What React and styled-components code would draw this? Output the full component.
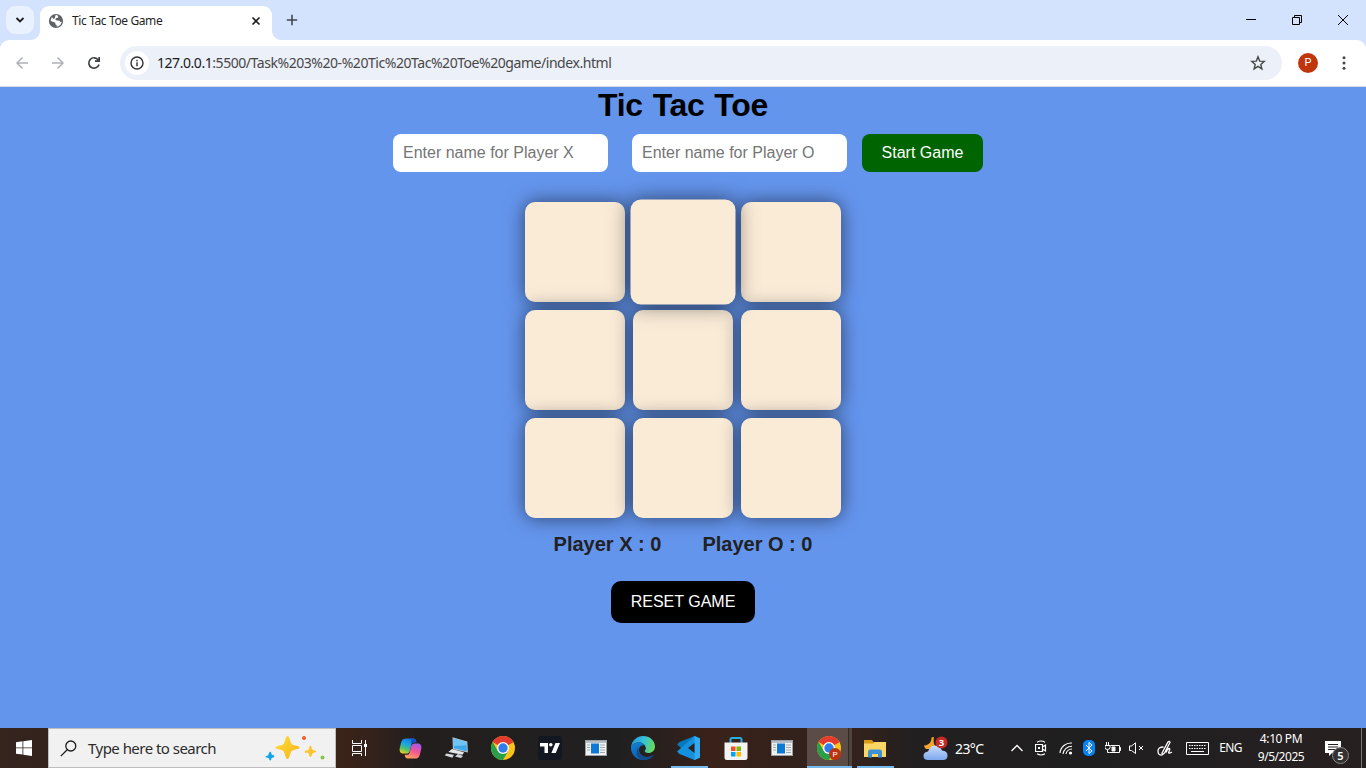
import React from "react";
import styled, { createGlobalStyle, css } from "styled-components";

const Global = createGlobalStyle`
  * { box-sizing: border-box; }
  html, body { margin: 0; padding: 0; overflow: hidden; }
`;

const ui = `"Noto Sans", "Open Sans", sans-serif`;
const arial = `"Liberation Sans", Arial, sans-serif`;

const Screen = styled.div`
  width: 1366px;
  height: 768px;
  display: flex;
  flex-direction: column;
  font-family: ${ui};
  overflow: hidden;
`;

/* ---------- browser chrome ---------- */

const TabStrip = styled.header`
  height: 40px;
  flex: none;
  background: #d3e2fd;
  display: flex;
  align-items: flex-start;
  padding-left: 6px;
`;

const TabSearch = styled.button`
  width: 28px;
  height: 28px;
  margin: 6px 6px 0 0;
  padding: 0;
  border: 0;
  border-radius: 9px;
  background: #e9f0fe;
  display: grid;
  place-items: center;
`;

const Tab = styled.div`
  position: relative;
  width: 232px;
  height: 34px;
  margin-top: 6px;
  padding: 0 9px 5px 8px;
  border-radius: 9px 9px 0 0;
  background: #fff;
  display: flex;
  align-items: center;
  &::before, &::after {
    content: "";
    position: absolute;
    bottom: 0;
    width: 9px;
    height: 9px;
  }
  &::before {
    left: -9px;
    background: radial-gradient(circle at 0 0, transparent 8.5px, #fff 9.2px);
  }
  &::after {
    right: -9px;
    background: radial-gradient(circle at 100% 0, transparent 8.5px, #fff 9.2px);
  }
`;

const TabTitle = styled.span`
  flex: 1;
  margin-left: 8px;
  font-size: 12px;
  line-height: 16px;
  letter-spacing: -0.38px;
  color: #1f1f1f;
  white-space: nowrap;
`;

const NewTab = styled.div`
  margin: 14px 0 0 14px;
  height: 12px;
  display: flex;
`;

const WindowControls = styled.div`
  margin-left: auto;
  display: flex;
`;

const WindowButton = styled.div`
  width: 46px;
  height: 40px;
  display: grid;
  place-items: center;
`;

const ToolbarBack = styled.div`
  flex: none;
  background: #d3e2fd;
`;

const Toolbar = styled.nav`
  height: 47px;
  background: #fff;
  border-radius: 9px 9px 0 0;
  border-bottom: 1px solid #d6dae2;
  display: flex;
  align-items: center;
  padding: 0 14px 0 14px;
`;

const NavIcon = styled.div`
  width: 16px;
  height: 16px;
  margin-right: 20px;
  display: flex;
`;

const AddressBar = styled.div`
  width: 1162px;
  height: 34px;
  margin-left: -2px;
  border-radius: 17px;
  background: #ecf0f9;
  display: flex;
  align-items: center;
  padding: 0 16px 0 5px;
`;

const SiteInfo = styled.div`
  width: 24px;
  height: 24px;
  border-radius: 50%;
  background: #fff;
  display: grid;
  place-items: center;
  margin-right: 8px;
`;

const Url = styled.span`
  flex: 1;
  font-size: 14px;
  line-height: 20px;
  letter-spacing: -0.45px;
  white-space: nowrap;
  color: #474747;
  b { font-weight: 400; color: #1a1a1a; }
`;

const Profile = styled.div`
  width: 20px;
  height: 20px;
  border-radius: 50%;
  background: #bf360c;
  color: #fff;
  font: 400 11px/20px Roboto, sans-serif;
  text-align: center;
  margin: 0 18px 0 16px;
`;

/* ---------- game page ---------- */

const Page = styled.main`
  height: 641px;
  flex: none;
  background: #6495ed;
  display: flex;
  flex-direction: column;
  align-items: center;
  font-family: ${arial};
  overflow: hidden;
`;

const Title = styled.h1`
  margin: 0;
  height: 37px;
  font-size: 32px;
  line-height: 37px;
  font-weight: 700;
  letter-spacing: -0.3px;
  word-spacing: 1.2px;
  color: #000;
`;

const Players = styled.form`
  display: flex;
  margin: 10px 0 0 10px;
`;

const NameInput = styled.input`
  width: 215px;
  height: 38px;
  padding: 0 10px;
  margin-right: ${(p) => p.$gap}px;
  border: 0;
  border-radius: 8px;
  background: #fff;
  font: 16px ${arial};
  color: #000;
  &::placeholder { color: #757575; opacity: 1; }
`;

const Button = styled.button`
  width: ${(p) => p.$width}px;
  height: ${(p) => p.$height}px;
  border: 0;
  padding: 0;
  border-radius: ${(p) => p.$radius}px;
  background: ${(p) => p.$color};
  color: #fff;
  font: 16px ${arial};
`;

const Board = styled.section`
  display: grid;
  grid-template-columns: repeat(3, 100px);
  grid-auto-rows: 100px;
  gap: 8px;
  margin-top: 30px;
`;

const Cell = styled.div`
  border-radius: 10px;
  background: #faebd7;
  box-shadow: 0 0 20px rgba(0, 0, 0, 0.55);
  ${(p) => p.$hover && css`
    transform: scale(1.05);
  `}
`;

const Scores = styled.div`
  display: flex;
  gap: 41px;
  height: 24px;
  margin: 14px 0 25px;
  font-size: 20px;
  line-height: 24px;
  font-weight: 700;
  color: #212121;
`;

/* ---------- taskbar ---------- */

const Taskbar = styled.footer`
  height: 40px;
  flex: none;
  display: flex;
  color: #fff;
  background: linear-gradient(90deg, #36241d 0, #33231d 48px, #3b2318 336px, #35221b 370px, #231e1e 415px, #201f20 620px, #2b201d 670px, #3a2219 710px, #33211b 790px, #33221d 860px, #211f1f 915px, #201f20 1100px, #272021 1366px);
  > * { flex: none; }
`;

const Start = styled.div`
  width: 48px;
  display: grid;
  place-items: center;
`;

const Search = styled.div`
  width: 288px;
  background: #f1f1f1;
  border: 1px solid #bdbdbd;
  display: flex;
  align-items: center;
  padding: 0 9px 0 11px;
`;

const SearchText = styled.span`
  flex: 1;
  margin-left: 11px;
  font-size: 15px;
  line-height: 20px;
  letter-spacing: -0.53px;
  color: #2c2c2c;
  white-space: nowrap;
`;

const TaskView = styled.div`
  width: 48px;
  display: grid;
  place-items: center;
`;

const Apps = styled.div`
  display: flex;
  padding-left: 3px;
`;

const AppSlot = styled.div`
  width: 46.5px;
  display: flex;
  justify-content: center;
  align-items: center;
  svg { flex: none; }
`;

const Underlined = styled.div`
  width: ${(p) => p.$width}px;
  height: 40px;
  flex: none;
  border-bottom: 2px solid #76b9ed;
  padding-top: 2px;
  display: grid;
  place-items: center;
  ${(p) => p.$active && css`
    margin-left: 1px;
    background: linear-gradient(90deg, #5b4c47 0 41px, #332925 41px 42px, #50423e 42px);
  `}
`;

const Weather = styled.div`
  display: flex;
  align-items: center;
  margin-left: 24.5px;
  width: 82px;
  gap: 7px;
`;

const Temp = styled.span`
  font-size: 14px;
  letter-spacing: -0.6px;
  white-space: nowrap;
`;

const TrayItem = styled.div`
  width: ${(p) => p.$width}px;
  display: grid;
  place-items: center;
`;

const TrayText = styled.span`
  font-size: 12px;
  line-height: 18px;
  letter-spacing: ${(p) => p.$spacing || 0}px;
  white-space: nowrap;
`;

const Clock = styled.div`
  width: 66px;
  display: flex;
  flex-direction: column;
  align-items: center;
  padding-top: 2px;
`;

const Notifications = styled.div`
  position: relative;
  width: 48px;
  padding: 12px 0 0 11px;
  border-right: 1px solid #777;
`;

const Count = styled.span`
  position: absolute;
  left: 18px;
  top: 19px;
  width: 17px;
  height: 17px;
  border-radius: 50%;
  border: 1px solid #8a8a8a;
  background: #333132;
  font: 600 11px/15px ${ui};
  text-align: center;
`;

/* ---------- icons ---------- */

const Stroke = ({ w = 16, h = 16, c = "#fff", sw = 1, d, children }) => (
  <svg width={w} height={h} viewBox={`0 0 ${w} ${h}`} fill="none" stroke={c} strokeWidth={sw}>
    {d && <path d={d} />}
    {children}
  </svg>
);

const Globe = () => (
  <svg width="16" height="16" viewBox="0 0 16 16">
    <circle cx="8" cy="8" r="7.1" fill="#5f6368" />
    <path d="M7.2 2.4 9 2.1l1.2 1.1-.3 1.6-2 .5-.5 1.6 1.8.7 2.3.2.9 1.2 1.2-.3.2-1.6A5.7 5.7 0 0 1 8.6 13.7l.2-1.5-1.5-.9.1-1.5-1.8-.9-2.8-.8A5.6 5.6 0 0 1 4 4l1.3 2 1.7-.9z" fill="#fff" />
  </svg>
);

const Sparkles = () => (
  <svg width="62" height="28" viewBox="0 0 62 28">
    <defs>
      <linearGradient id="gold" x1="0" y1="0" x2="1" y2="1">
        <stop offset="0" stopColor="#ffdc43" /><stop offset="1" stopColor="#f7b512" />
      </linearGradient>
    </defs>
    <path d="M23.500 2c2.300 0 2.500 6.500 4.500 8.200S35.500 11.500 35.500 13.500s-6 1.800-7.800 3.500-2 8-4.200 8-2.500-6.500-4.300-8.100-7.700-1.200-7.700-3.300 6-1.600 7.800-3.400S21.500 2 23.500 2z" fill="url(#gold)" />
    <path d="M46.500 11.500c1.200 0 1 3.500 2 4.200s3.700.6 3.700 1.700-2.700 1-3.500 1.800S47.700 23 46.500 23s-1.200-3-2-3.800-3.800-.7-3.800-1.800 2.800-.9 3.700-1.700.9-4.200 2.100-4.200z" fill="#fbc530" />
    <path d="M6.200 17.800c1.200-.2 1 2.200 1.600 2.800s2.600.6 2.500 1.800-2 .8-2.600 1.500-.3 2.600-1.500 2.500-1-1.800-1.700-2.400-3 .1-3-1.100 2-1 2.600-1.700.9-3.200 2.100-3.400z" fill="#12a4ea" />
    <circle cx="40" cy="4" r="2" fill="#f25a29" /><circle cx="58.500" cy="23.500" r="2" fill="#87c540" />
  </svg>
);

const Copilot = () => (
  <svg width="23" height="23" viewBox="0 0 24 24">
    <defs>
      <linearGradient id="cpA" x1=".6" y1="0" x2=".2" y2="1">
        <stop offset="0" stopColor="#1775df" /><stop offset=".4" stopColor="#17a9e4" /><stop offset=".7" stopColor="#54bf69" /><stop offset="1" stopColor="#f2d51e" />
      </linearGradient>
      <linearGradient id="cpB" x1=".7" y1="0" x2=".3" y2="1">
        <stop offset="0" stopColor="#a458ee" /><stop offset=".5" stopColor="#f25590" /><stop offset="1" stopColor="#fba35e" />
      </linearGradient>
    </defs>
    <path d="M8 1.500h7c2 0 2.700 1.500 3.200 4h-2.900c-1.400 0-2 .8-2.300 2l-1.600 6.500c-.6 2.400-1.800 3.300-3.600 3.300H4.500C1 17.300.2 14.500.8 11.500l1.400-5.700C3 2.500 4.800 1.500 8 1.500z" fill="url(#cpA)" />
    <path d="M12.500 1.500H15c2 0 2.700 1.500 3.200 4h-2.900c-1.400 0-2 .8-2.300 2z" fill="#1652ce" />
    <path d="M16 22.500H9c-2 0-2.700-1.500-3.200-4h2.900c1.400 0 2-.8 2.300-2l1.600-6.500c.6-2.400 1.800-3.300 3.600-3.300h3.300c3.500 0 4.300 2.800 3.700 5.800l-1.400 5.700c-.8 3.300-2.600 4.300-5 4.300z" fill="url(#cpB)" />
  </svg>
);

const Laptop = () => (
  <svg width="24" height="24" viewBox="0 0 24 24">
    <path d="m7.500 1.300 14.800 4.200.6 11-15-3.300z" fill="#b6c6d0" />
    <path d="m8.500 2.500 13 3.800.4 9-13-3z" fill="#3ba7ee" /><path d="m8.500 2.500 13 3.800.1 3-12.900.7z" fill="#70c4f7" />
    <path d="m7 13 12 3.200-1.500 2.600L3.300 16z" fill="#e5e8eb" /><path d="m1 17.500 8 1.200-1.700 3L0 19.500zM13 18l5 2-2 2-6-1.500z" fill="#d2d8dd" />
  </svg>
);

const Chrome = ({ badge }) => (
  <svg width="26" height="26" viewBox="0 0 26 26">
    <circle cx="13" cy="13" r="12" fill="#fbc31a" />
    <path d="M13 13 2.600 7A12 12 0 0 1 23.400 7z" fill="#e33b2e" /><path d="M13 7h10.400L13 13z" fill="#e33b2e" />
    <path d="M2.600 7A12 12 0 0 0 13 25l5.200-9L13 13 7.800 16z" fill="#2a9f4b" />
    <circle cx="13" cy="13" r="6" fill="#fff" /><circle cx="13" cy="13" r="4.700" fill="#2f7ded" />
    {badge && (
      <g>
        <circle cx="19" cy="19" r="6" fill="#bd3211" />
        <text x="19" y="22" textAnchor="middle" fontFamily="Roboto" fontSize="8" fill="#fff">P</text>
      </g>
    )}
  </svg>
);

const TradingView = () => (
  <svg width="24" height="24" viewBox="0 0 24 24">
    <rect width="24" height="24" rx="3" fill="#121722" />
    <path d="M2 7h8v10H6.500v-6.500H2zM17.500 7H22l-4.300 10h-4.300z" fill="#fff" /><circle cx="12.800" cy="8.800" r="1.800" fill="#fff" />
  </svg>
);

const WindowApp = () => (
  <svg width="22" height="18" viewBox="0 0 22 18">
    <rect x=".5" y="1.500" width="21" height="15" fill="#f1f1f1" stroke="#99a0a6" />
    <rect x="1" y="2" width="20" height="2" fill="#b6bdc4" /><rect x="6" y="4.500" width="8" height="10" fill="#0c79d6" />
    <path d="M2 6h3M2 8.500h3M2 11h3M15 6h5M15 8.500h5M15 11h5M15 13.500h5" stroke="#a4a8ac" />
  </svg>
);

const Edge = () => (
  <svg width="26" height="26" viewBox="0 0 26 26">
    <defs>
      <linearGradient id="edA" x1="0" y1=".3" x2="1" y2=".5">
        <stop offset="0" stopColor="#2197d9" /><stop offset=".5" stopColor="#35c1dc" /><stop offset="1" stopColor="#68db55" />
      </linearGradient>
      <linearGradient id="edB" x1="0" y1="0" x2=".6" y2="1">
        <stop offset="0" stopColor="#1583cf" /><stop offset="1" stopColor="#0b56a7" />
      </linearGradient>
    </defs>
    <path d="M1 12C2 5 7 1 13 1c7 0 12 5 12 10.500 0 4-3 6.500-6.500 6.500-3 0-4-1.200-3.700-2.300 1-1 1.200-2 1-3C15 9 12 7.500 9 7.500c-4 0-7 2-8 4.500z" fill="url(#edA)" />
    <path d="M1 12c1-3 4.500-4.700 8-4.500 3 .1 5.400 1.300 6.400 3.200C12.500 9.500 9 11 9 15c0 3.500 3 7 8 7 3 0 5-1.200 6-2-2 3.300-6 5-10 5C6 25 .5 19 1 12z" fill="url(#edB)" />
    <path d="M9 12c-2 5 1 10 7.500 10 2.700 0 4.600-.7 6-1.800.8-.4 1 .3.500 1-2 2.500-6 4-10 3.800C7 24 4.500 16 9 12z" fill="#104c8e" />
  </svg>
);

const VSCode = () => (
  <svg width="24" height="24" viewBox="0 0 24 24">
    <path d="M17.500 0 23 2.500v19L17.500 24 0 8.500 2.500 6z" fill="#0877b9" />
    <path d="M17.500 24 23 21.500v-19L17.500 0 0 15.500 2.500 18z" fill="#1391de" />
    <path d="M17.500 0v24l5.500-2.500v-19z" fill="#35a9f0" /><path d="M17.500 7v10l-6.500-5z" fill="#2b201d" />
  </svg>
);

const Store = () => (
  <svg width="24" height="25" viewBox="0 0 24 25">
    <path d="M6.500 7V3.500Q6.500 2 8 2h8q1.500 0 1.500 1.500V7" fill="none" stroke="#23afe0" strokeWidth="2" />
    <path d="M.5 6.500h23v15q0 2.500-2.500 2.500H3Q.5 24 .5 21.500z" fill="#f3f3f3" />
    <path d="M7 10.500h4.500V15H7z" fill="#f25022" /><path d="M12.500 10.500H17V15h-4.500z" fill="#7fba00" />
    <path d="M7 16h4.500v4.500H7z" fill="#00a4ef" /><path d="M12.500 16H17v4.500h-4.500z" fill="#ffb900" />
  </svg>
);

const Folder = () => (
  <svg width="22" height="19" viewBox="0 0 22 19">
    <path d="M0 1h8l1.500 2H22v4H0z" fill="#d89a16" /><path d="M0 4.500h9L10.500 3H22v15H0z" fill="#fbd566" />
    <path d="M4 18.500V13q0-2.500 2.500-2.500h9Q18 10.500 18 13v5.500h-4V15H8v3.500z" fill="#3b93d5" />
  </svg>
);

const WeatherIcon = () => (
  <svg width="25" height="25" viewBox="0 0 25 25">
    <defs><linearGradient id="cl" x1="0" y1="0" x2="0" y2="1"><stop offset="0" stopColor="#cadcfb" /><stop offset="1" stopColor="#7ea7ee" /></linearGradient></defs>
    <path d="M11 1c-1 5 0 10 5 12H3q-2-2-2-3.500C7 9 8.500 5 8.500 1.500z" fill="#f5a42c" />
    <path d="M5 24q-4.500 0-4.500-4T5 15.500Q7 9.500 12 9.500t7 5q5.500.5 5.500 5T20 24z" fill="url(#cl)" />
    <circle cx="18.500" cy="6.500" r="6" fill="#c72b26" />
    <text x="18.500" y="10" textAnchor="middle" fontFamily="Noto Sans" fontSize="9.500" fontWeight="700" fill="#fff">3</text>
  </svg>
);

const APPS = [
  { icon: <Copilot /> }, { icon: <Laptop /> }, { icon: <Chrome /> }, { icon: <TradingView /> },
  { icon: <WindowApp /> }, { icon: <Edge /> }, { icon: <VSCode />, line: 37 }, { icon: <Store /> },
  { icon: <WindowApp /> }, { icon: <Chrome badge />, line: 45, active: true }, { icon: <Folder />, line: 37 },
];

export default function App() {
  return (
    <Screen>
      <Global />
      <TabStrip>
        <TabSearch><Stroke w={10} h={6} c="#1f1f1f" sw={1.800} d="m1.500 1 3.500 3.500L8.500 1" /></TabSearch>
        <Tab>
          <Globe />
          <TabTitle>Tic Tac Toe Game</TabTitle>
          <Stroke w={14} h={14} c="#1f1f1f" sw={1.600} d="m3.500 3.500 7 7m0-7-7 7" />
        </Tab>
        <NewTab><Stroke w={12} h={12} c="#44474c" sw={1.600} d="M6 .8v10.400M.8 6h10.400" /></NewTab>
        <WindowControls>
          <WindowButton><Stroke w={10} h={10} c="#000" d="M0 4.500h10" /></WindowButton>
          <WindowButton><Stroke w={10} h={10} c="#000" d="M.5 2.500h7v7h-7zM2.500 2.500v-2h7v7h-2" /></WindowButton>
          <WindowButton><Stroke w={10} h={10} c="#000" d="m0 0 10 10M10 0 0 10" /></WindowButton>
        </WindowControls>
      </TabStrip>
      <ToolbarBack>
        <Toolbar>
          <NavIcon><Stroke c="#aeb1b5" sw={1.500} d="M14 8H3m5.500-5.500L3 8l5.500 5.500" /></NavIcon>
          <NavIcon><Stroke c="#aeb1b5" sw={1.500} d="M2 8h11M7.500 2.500 13 8l-5.500 5.500" /></NavIcon>
          <NavIcon><Stroke c="#3c4043" sw={1.700} d="M13 9.500A5.200 5.200 0 1 1 12.300 5M13.200 2v4.200H9" /></NavIcon>
          <AddressBar>
            <SiteInfo>
              <Stroke w={14} h={14} c="#303134" sw={1.400}>
                <circle cx="7" cy="7" r="6" /><path d="M7 6.200V10.300M7 3.700v1.500" />
              </Stroke>
            </SiteInfo>
            <Url><b>127.0.0.1</b>:5500/Task%203%20-%20Tic%20Tac%20Toe%20game/index.html</Url>
            <Stroke c="#474747" sw={1.400} d="m8 1.800 1.700 4.300 4.600.3-3.500 3 1.100 4.500L8 11.400l-3.900 2.500 1.100-4.500-3.500-3 4.600-.3z" />
          </AddressBar>
          <Profile>P</Profile>
          <svg width="16" height="16" viewBox="0 0 16 16" fill="#474747">
            <circle cx="8" cy="2.700" r="1.500" /><circle cx="8" cy="8" r="1.500" /><circle cx="8" cy="13.300" r="1.500" />
          </svg>
        </Toolbar>
      </ToolbarBack>

      <Page>
        <Title>Tic Tac Toe</Title>
        <Players>
          <NameInput $gap={24} placeholder="Enter name for Player X" />
          <NameInput $gap={15} placeholder="Enter name for Player O" />
          <Button type="button" $width={121} $height={38} $radius={8} $color="#006400">Start Game</Button>
        </Players>
        <Board>
          {Array.from({ length: 9 }, (_, i) => <Cell key={i} $hover={i === 1} />)}
        </Board>
        <Scores><span>Player X : 0</span><span>Player O : 0</span></Scores>
        <Button $width={144} $height={42} $radius={10} $color="#000">RESET GAME</Button>
      </Page>

      <Taskbar>
        <Start>
          <svg width="16" height="16" viewBox="0 0 16 16" fill="#fff">
            <path d="M0 2.300 6.500 1.300v6.200H0zM7.300 1.200 16 0v7.500H7.300zM0 8.300h6.500v6.300L0 13.700zM7.300 8.300H16V16l-8.700-1.200z" />
          </svg>
        </Start>
        <Search>
          <Stroke w={17} h={17} c="#1d1d1d" sw={1.300}><circle cx="10.800" cy="6" r="5" /><path d="M7.200 9.700.8 16.100" /></Stroke>
          <SearchText>Type here to search</SearchText>
          <Sparkles />
        </Search>
        <TaskView>
          <Stroke w={18} h={16} d="M1.500 0v3.500h9V0M1.500 5.500h9v6h-9zM1.500 16v-2.500h9V16M14.500 0v16">
            <path d="M13 5.500h3" strokeWidth="3" />
          </Stroke>
        </TaskView>
        <Apps>
          {APPS.map((a, i) => (
            <AppSlot key={i}>
              {a.line ? <Underlined $width={a.line} $active={a.active}>{a.icon}</Underlined> : a.icon}
            </AppSlot>
          ))}
        </Apps>
        <Weather><WeatherIcon /><Temp>23°C</Temp></Weather>
        <TrayItem $width={24}><Stroke w={12} h={8} sw={1.300} d="m.5 7 5.500-5.500L11.500 7" /></TrayItem>
        <TrayItem $width={24}>
          <Stroke w={12} h={16} sw={1.200} d="M.5 4.500h7v7h-7zM7.500 7l3-2v6l-3-2M2 2.200q4-2.400 8 0M2 13.800q4 2.400 8 0"><path d="M3 8h2" strokeWidth="2" /></Stroke>
        </TrayItem>
        <TrayItem $width={25}>
          <Stroke w={14} h={14} sw={1.100} d="M1 12A11 11 0 0 1 13 2M4 13A9 9 0 0 1 13 5.200M7 13a6 6 0 0 1 6-5"><circle cx="11.500" cy="12" r="1" fill="#fff" /></Stroke>
        </TrayItem>
        <TrayItem $width={22}>
          <svg width="12" height="16" viewBox="0 0 12 16">
            <rect width="12" height="16" rx="5" fill="#0a83f5" /><path d="m3 5 6 6-3 2.500v-11L9 5l-6 6" fill="none" stroke="#fff" />
          </svg>
        </TrayItem>
        <TrayItem $width={25}>
          <Stroke w={16} h={12} d="M5.500 3.500h9v7h-10M14.500 5.500h1v3h-1M1.500 0v3M3.500 0v3M0 3.500h5v2q0 2-2.500 2T0 5.500zM2.500 7.500v3h2"><path d="M7 5h3v4H7z" fill="#fff" /></Stroke>
        </TrayItem>
        <TrayItem $width={23}><Stroke w={15} h={12} d="M.5 4h2L6.500 .8v10.700L2.500 8.500h-2zM10 4l4 4M14 4l-4 4" /></TrayItem>
        <TrayItem $width={34}>
          <Stroke w={17} h={17} sw={1.300} d="M5 13 11 2q1.500-1.500 2 .5L7.500 13 5 15zM6.500 7Q1 7 1 11t3 4M9 12.500q1.500-4 3-4t0 3 3 .5" />
        </TrayItem>
        <TrayItem $width={31}>
          <Stroke w={23} h={13} d="M.5.5h22v12H.5z"><path d="M3 3.500h17M3 6.500h17" strokeDasharray="1.500 1" /><path d="M5 9.500h13" /></Stroke>
        </TrayItem>
        <TrayItem $width={35}><TrayText $spacing={-0.600}>ENG</TrayText></TrayItem>
        <Clock><TrayText $spacing={-0.400}>4:10 PM</TrayText><TrayText $spacing={-0.450}>9/5/2025</TrayText></Clock>
        <Notifications>
          <svg width="16" height="16" viewBox="0 0 16 16">
            <path d="M0 0h16v12H7l-3 3v-3H0z" fill="#fff" /><path d="M3 3.500h10M3 6h10M3 8.500h7" stroke="#242020" />
          </svg>
          <Count>5</Count>
        </Notifications>
      </Taskbar>
    </Screen>
  );
}
